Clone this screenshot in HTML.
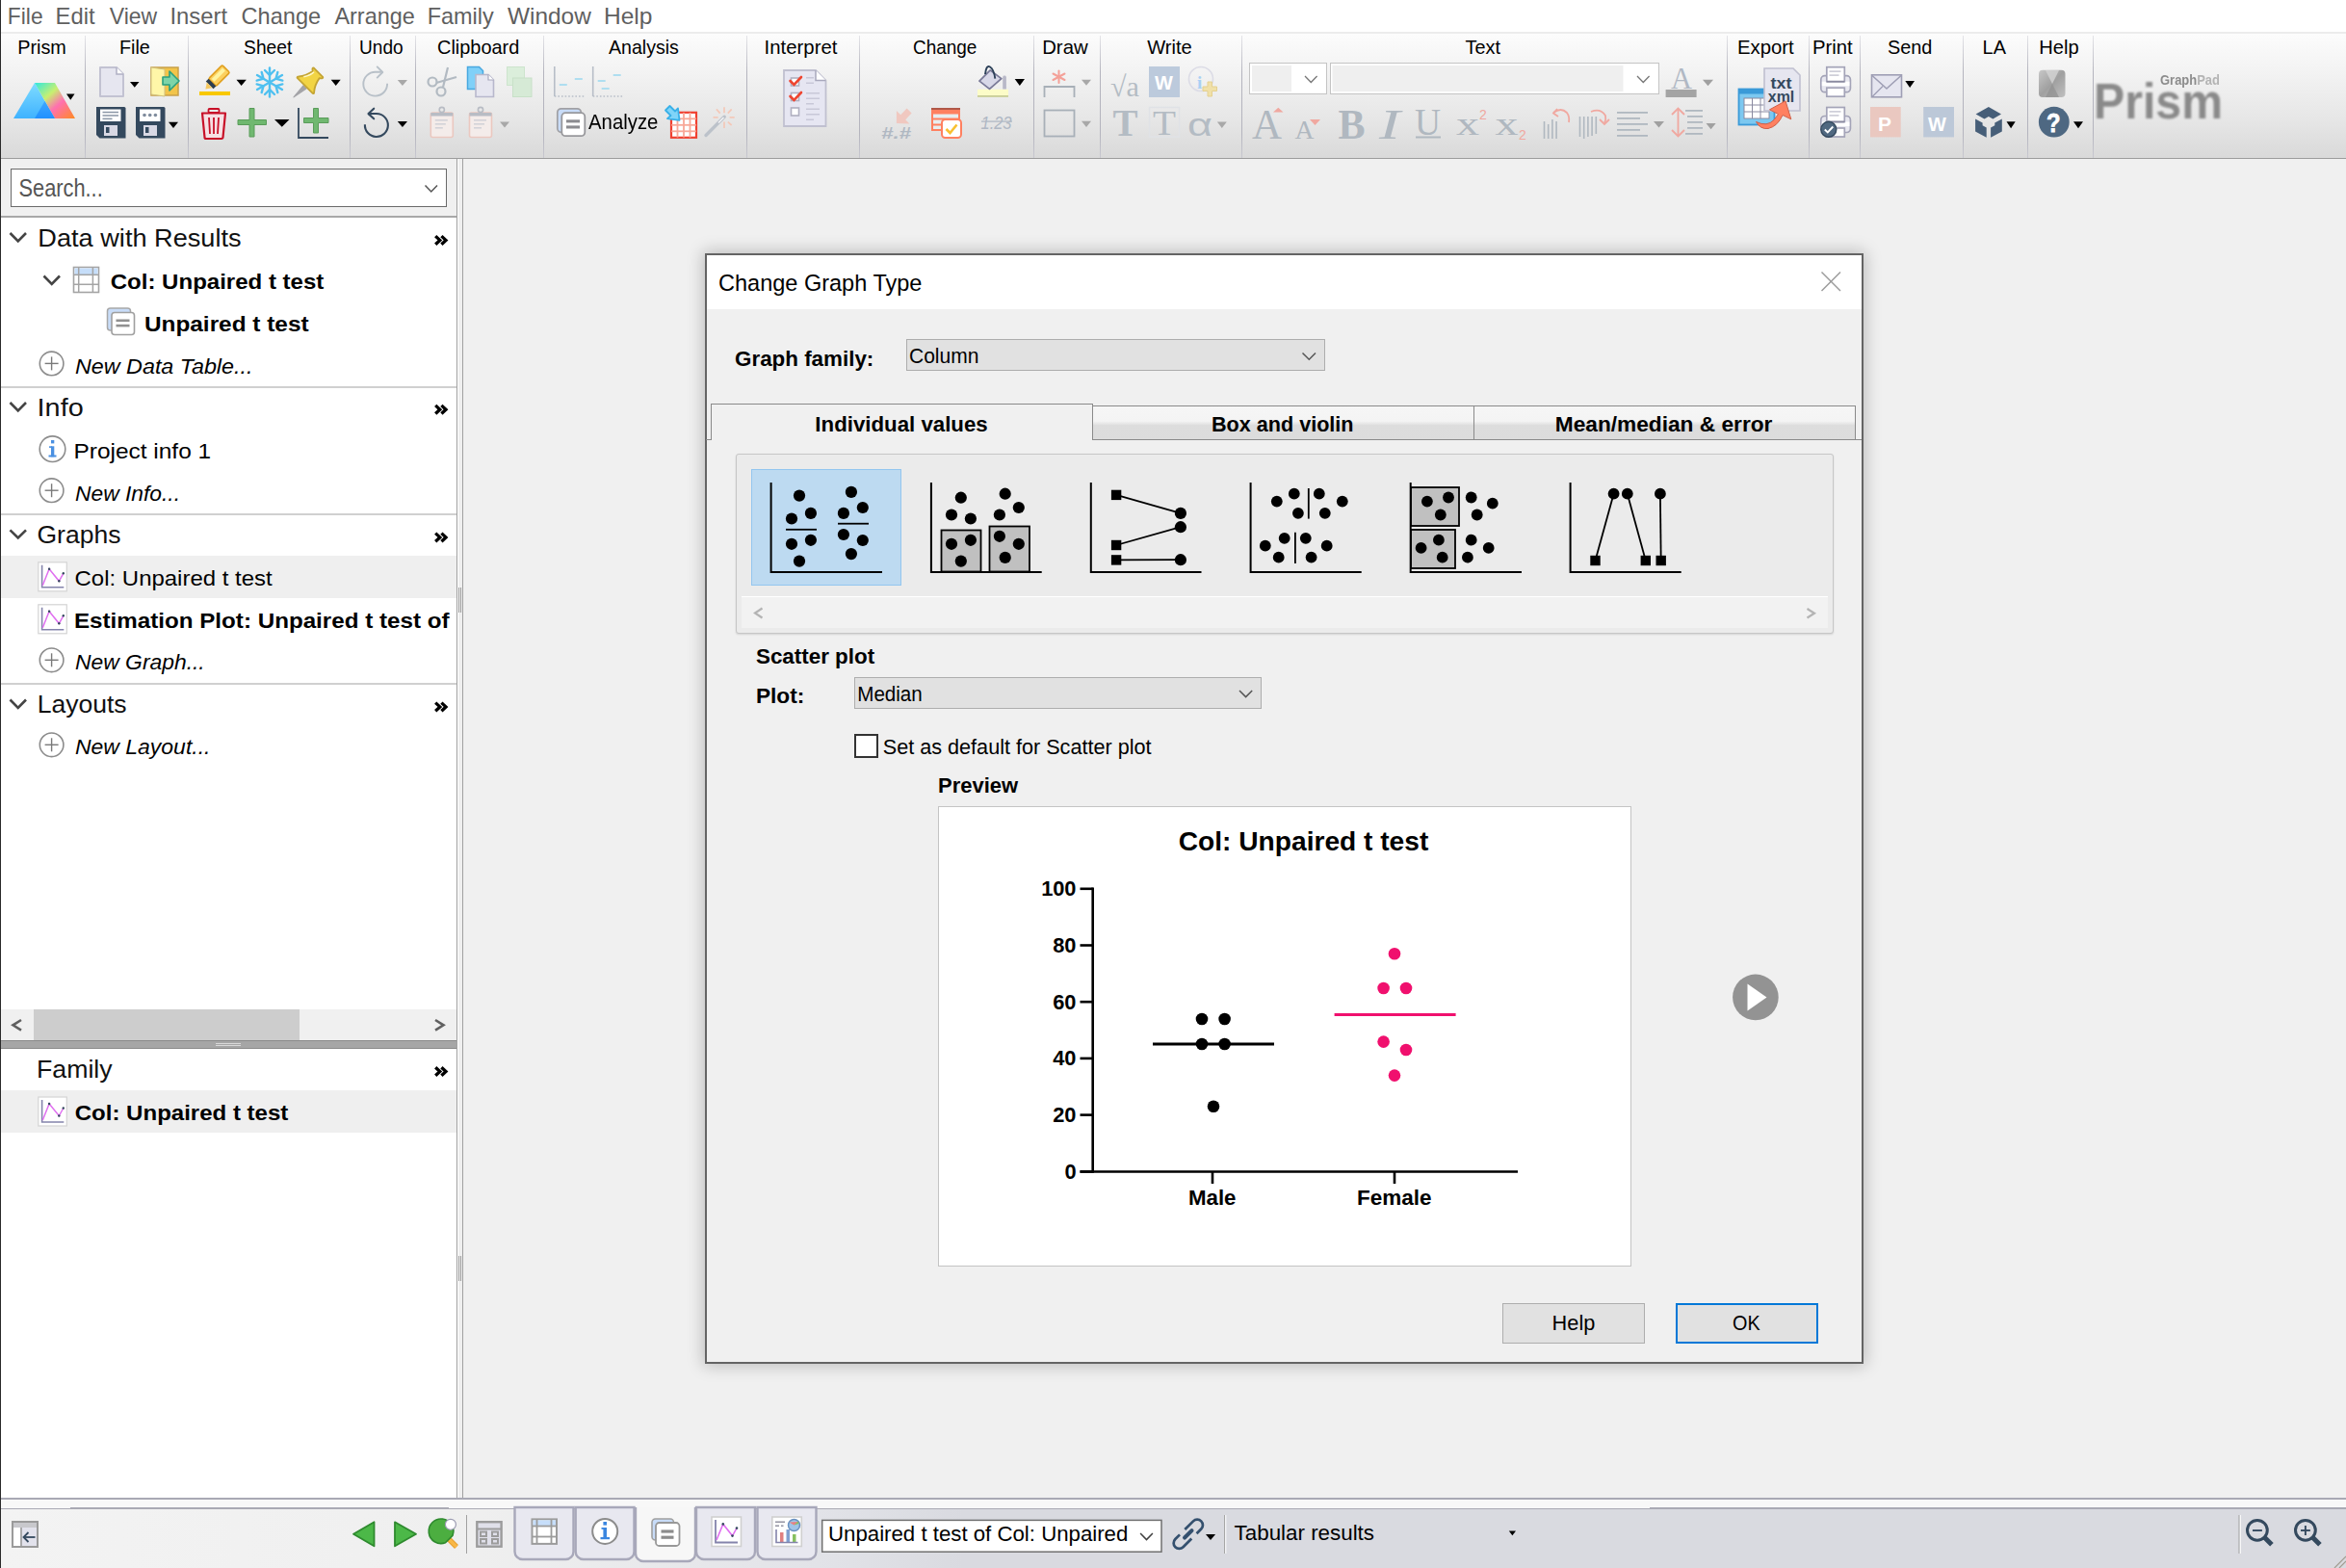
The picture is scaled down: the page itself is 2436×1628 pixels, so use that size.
<!DOCTYPE html><html><head><meta charset="utf-8"><style>
html,body{margin:0;padding:0;width:2436px;height:1628px;overflow:hidden;background:#f0f0f0;position:relative;font-family:"Liberation Sans",sans-serif}
.tx{position:absolute;white-space:nowrap}
svg{overflow:visible}
</style></head><body>
<div style="position:absolute;left:0px;top:0px;width:2436px;height:33px;background:#ffffff;"></div>
<div style="position:absolute;left:0px;top:33px;width:2436px;height:2px;background:#ececec;"></div>
<div style="position:absolute;left:0px;top:35px;width:2436px;height:129px;background:linear-gradient(#fcfcfc, #f3f3f3 30%, #e6e6e6 70%, #d9d9d9);"></div>
<div style="position:absolute;left:0px;top:164px;width:2436px;height:1px;background:#9c9c9c;"></div>
<div id="t_71c6356a2c" class="tx" style="left:9.6px;top:4.58px;font-size:24px;line-height:24px;font-weight:400;font-style:normal;color:#5f5f5f;font-family:'Liberation Sans',sans-serif;transform:translateX(-2.15px) scaleX(0.9506);transform-origin:0 0;">File</div>
<div id="t_c482373fa4" class="tx" style="left:59.7px;top:4.58px;font-size:24px;line-height:24px;font-weight:400;font-style:normal;color:#5f5f5f;font-family:'Liberation Sans',sans-serif;transform:translateX(-2.38px) scaleX(0.9904);transform-origin:0 0;">Edit</div>
<div id="t_5e11d77b09" class="tx" style="left:113.6px;top:4.58px;font-size:24px;line-height:24px;font-weight:400;font-style:normal;color:#5f5f5f;font-family:'Liberation Sans',sans-serif;transform:translateX(-0.20px) scaleX(0.9579);transform-origin:0 0;">View</div>
<div id="t_2e67d88531" class="tx" style="left:178.3px;top:4.58px;font-size:24px;line-height:24px;font-weight:400;font-style:normal;color:#5f5f5f;font-family:'Liberation Sans',sans-serif;transform:translateX(-1.60px) scaleX(0.9933);transform-origin:0 0;">Insert</div>
<div id="t_f1728f0a19" class="tx" style="left:251.7px;top:4.58px;font-size:24px;line-height:24px;font-weight:400;font-style:normal;color:#5f5f5f;font-family:'Liberation Sans',sans-serif;transform:translateX(-1.39px) scaleX(0.9809);transform-origin:0 0;">Change</div>
<div id="t_43a4b59b92" class="tx" style="left:347.8px;top:4.58px;font-size:24px;line-height:24px;font-weight:400;font-style:normal;color:#5f5f5f;font-family:'Liberation Sans',sans-serif;transform:translateX(-0.60px) scaleX(0.9764);transform-origin:0 0;">Arrange</div>
<div id="t_7ee1135975" class="tx" style="left:445.7px;top:4.58px;font-size:24px;line-height:24px;font-weight:400;font-style:normal;color:#5f5f5f;font-family:'Liberation Sans',sans-serif;transform:translateX(-2.35px) scaleX(0.9769);transform-origin:0 0;">Family</div>
<div id="t_ff34accd8c" class="tx" style="left:527.5px;top:4.58px;font-size:24px;line-height:24px;font-weight:400;font-style:normal;color:#5f5f5f;font-family:'Liberation Sans',sans-serif;transform:translateX(-1.01px) scaleX(1.0164);transform-origin:0 0;">Window</div>
<div id="t_89f8c1d0c2" class="tx" style="left:628.5px;top:4.58px;font-size:24px;line-height:24px;font-weight:400;font-style:normal;color:#5f5f5f;font-family:'Liberation Sans',sans-serif;transform:translateX(-2.02px) scaleX(1.0218);transform-origin:0 0;">Help</div>
<div style="position:absolute;left:88px;top:37px;width:1px;height:127px;background:linear-gradient(#e4e4e8, #b4b4be 30%, #b4b4be 80%, #c8c8d0);"></div>
<div style="position:absolute;left:195px;top:37px;width:1px;height:127px;background:linear-gradient(#e4e4e8, #b4b4be 30%, #b4b4be 80%, #c8c8d0);"></div>
<div style="position:absolute;left:363px;top:37px;width:1px;height:127px;background:linear-gradient(#e4e4e8, #b4b4be 30%, #b4b4be 80%, #c8c8d0);"></div>
<div style="position:absolute;left:431px;top:37px;width:1px;height:127px;background:linear-gradient(#e4e4e8, #b4b4be 30%, #b4b4be 80%, #c8c8d0);"></div>
<div style="position:absolute;left:564px;top:37px;width:1px;height:127px;background:linear-gradient(#e4e4e8, #b4b4be 30%, #b4b4be 80%, #c8c8d0);"></div>
<div style="position:absolute;left:775px;top:37px;width:1px;height:127px;background:linear-gradient(#e4e4e8, #b4b4be 30%, #b4b4be 80%, #c8c8d0);"></div>
<div style="position:absolute;left:892px;top:37px;width:1px;height:127px;background:linear-gradient(#e4e4e8, #b4b4be 30%, #b4b4be 80%, #c8c8d0);"></div>
<div style="position:absolute;left:1073px;top:37px;width:1px;height:127px;background:linear-gradient(#e4e4e8, #b4b4be 30%, #b4b4be 80%, #c8c8d0);"></div>
<div style="position:absolute;left:1142px;top:37px;width:1px;height:127px;background:linear-gradient(#e4e4e8, #b4b4be 30%, #b4b4be 80%, #c8c8d0);"></div>
<div style="position:absolute;left:1289px;top:37px;width:1px;height:127px;background:linear-gradient(#e4e4e8, #b4b4be 30%, #b4b4be 80%, #c8c8d0);"></div>
<div style="position:absolute;left:1793px;top:37px;width:1px;height:127px;background:linear-gradient(#e4e4e8, #b4b4be 30%, #b4b4be 80%, #c8c8d0);"></div>
<div style="position:absolute;left:1878px;top:37px;width:1px;height:127px;background:linear-gradient(#e4e4e8, #b4b4be 30%, #b4b4be 80%, #c8c8d0);"></div>
<div style="position:absolute;left:1931px;top:37px;width:1px;height:127px;background:linear-gradient(#e4e4e8, #b4b4be 30%, #b4b4be 80%, #c8c8d0);"></div>
<div style="position:absolute;left:2038px;top:37px;width:1px;height:127px;background:linear-gradient(#e4e4e8, #b4b4be 30%, #b4b4be 80%, #c8c8d0);"></div>
<div style="position:absolute;left:2105px;top:37px;width:1px;height:127px;background:linear-gradient(#e4e4e8, #b4b4be 30%, #b4b4be 80%, #c8c8d0);"></div>
<div style="position:absolute;left:2173px;top:37px;width:1px;height:127px;background:linear-gradient(#e4e4e8, #b4b4be 30%, #b4b4be 80%, #c8c8d0);"></div>
<div id="t_4e412e6ac3" class="tx" style="left:19.9px;top:38.73px;font-size:20.4px;line-height:20.4px;font-weight:400;font-style:normal;color:#000;font-family:'Liberation Sans',sans-serif;transform:translateX(-1.77px) scaleX(0.9718);transform-origin:0 0;">Prism</div>
<div id="t_3ec2d68212" class="tx" style="left:125.5px;top:38.73px;font-size:20.4px;line-height:20.4px;font-weight:400;font-style:normal;color:#000;font-family:'Liberation Sans',sans-serif;transform:translateX(-1.99px) scaleX(0.9689);transform-origin:0 0;">File</div>
<div id="t_ed9601ad73" class="tx" style="left:254px;top:38.73px;font-size:20.4px;line-height:20.4px;font-weight:400;font-style:normal;color:#000;font-family:'Liberation Sans',sans-serif;transform:translateX(-0.94px) scaleX(0.9427);transform-origin:0 0;">Sheet</div>
<div id="t_789032d242" class="tx" style="left:374px;top:38.73px;font-size:20.4px;line-height:20.4px;font-weight:400;font-style:normal;color:#000;font-family:'Liberation Sans',sans-serif;transform:translateX(-0.94px) scaleX(0.9362);transform-origin:0 0;">Undo</div>
<div id="t_c60f0eda41" class="tx" style="left:455px;top:38.73px;font-size:20.4px;line-height:20.4px;font-weight:400;font-style:normal;color:#000;font-family:'Liberation Sans',sans-serif;transform:translateX(-0.98px) scaleX(0.9765);transform-origin:0 0;">Clipboard</div>
<div id="t_12b302b7a3" class="tx" style="left:632.5px;top:38.73px;font-size:20.4px;line-height:20.4px;font-weight:400;font-style:normal;color:#000;font-family:'Liberation Sans',sans-serif;transform:translateX(-1.02px) scaleX(0.9600);transform-origin:0 0;">Analysis</div>
<div id="t_63e9136e1a" class="tx" style="left:795.7px;top:38.73px;font-size:20.4px;line-height:20.4px;font-weight:400;font-style:normal;color:#000;font-family:'Liberation Sans',sans-serif;transform:translateX(-2.38px) scaleX(0.9975);transform-origin:0 0;">Interpret</div>
<div id="t_b00e8f179c" class="tx" style="left:948.5px;top:38.73px;font-size:20.4px;line-height:20.4px;font-weight:400;font-style:normal;color:#000;font-family:'Liberation Sans',sans-serif;transform:translateX(-0.96px) scaleX(0.9286);transform-origin:0 0;">Change</div>
<div id="t_90dcf28672" class="tx" style="left:1083.4px;top:38.73px;font-size:20.4px;line-height:20.4px;font-weight:400;font-style:normal;color:#000;font-family:'Liberation Sans',sans-serif;transform:translateX(-0.81px) scaleX(0.9970);transform-origin:0 0;">Draw</div>
<div id="t_9900720f19" class="tx" style="left:1191.4px;top:38.73px;font-size:20.4px;line-height:20.4px;font-weight:400;font-style:normal;color:#000;font-family:'Liberation Sans',sans-serif;transform:translateX(0.20px) scaleX(0.9874);transform-origin:0 0;">Write</div>
<div id="t_c89a2ac3e7" class="tx" style="left:1521.7px;top:38.73px;font-size:20.4px;line-height:20.4px;font-weight:400;font-style:normal;color:#000;font-family:'Liberation Sans',sans-serif;transform:translateX(-0.39px) scaleX(0.9737);transform-origin:0 0;">Text</div>
<div id="t_b28e720482" class="tx" style="left:1806px;top:38.73px;font-size:20.4px;line-height:20.4px;font-weight:400;font-style:normal;color:#000;font-family:'Liberation Sans',sans-serif;transform:translateX(-2.01px) scaleX(0.9968);transform-origin:0 0;">Export</div>
<div id="t_bbdc3bfa97" class="tx" style="left:1884px;top:38.73px;font-size:20.4px;line-height:20.4px;font-weight:400;font-style:normal;color:#000;font-family:'Liberation Sans',sans-serif;transform:translateX(-1.99px) scaleX(0.9956);transform-origin:0 0;">Print</div>
<div id="t_a9b1d18a54" class="tx" style="left:1961px;top:38.73px;font-size:20.4px;line-height:20.4px;font-weight:400;font-style:normal;color:#000;font-family:'Liberation Sans',sans-serif;transform:translateX(-0.96px) scaleX(0.9739);transform-origin:0 0;">Send</div>
<div id="t_51d7edf9fc" class="tx" style="left:2059.7px;top:38.73px;font-size:20.4px;line-height:20.4px;font-weight:400;font-style:normal;color:#000;font-family:'Liberation Sans',sans-serif;transform:translateX(-1.40px) scaleX(0.9763);transform-origin:0 0;">LA</div>
<div id="t_e65a24fe2b" class="tx" style="left:2118.9px;top:38.73px;font-size:20.4px;line-height:20.4px;font-weight:400;font-style:normal;color:#000;font-family:'Liberation Sans',sans-serif;transform:translateX(-1.78px) scaleX(0.9856);transform-origin:0 0;">Help</div>
<div style="position:absolute;left:0px;top:0px;width:1px;height:1628px;background:#2a2a2a;"></div>
<div style="position:absolute;left:1px;top:165px;width:473px;height:1390px;background:#ffffff;"></div>
<div style="position:absolute;left:1px;top:165px;width:473px;height:59px;background:#f0f0f0;"></div>
<div style="position:absolute;left:1px;top:224px;width:473px;height:2px;background:#a8a8a8;"></div>
<div style="position:absolute;left:474px;top:165px;width:1px;height:1390px;background:#a0a0a0;"></div>
<div style="position:absolute;left:475px;top:165px;width:1px;height:1390px;background:#ffffff;"></div>
<div style="position:absolute;left:476px;top:165px;width:4px;height:1390px;background:#efefef;"></div>
<div style="position:absolute;left:480px;top:165px;width:1px;height:1390px;background:#a0a0a0;"></div>
<div style="position:absolute;left:0px;top:1555px;width:2436px;height:2px;background:#a9a9b4;"></div>
<div style="position:absolute;left:0px;top:1557px;width:2436px;height:9px;background:#f8f8f8;"></div>
<div style="position:absolute;left:0px;top:1566px;width:2436px;height:1px;background:#aaaab4;"></div>
<div style="position:absolute;left:73px;top:1565px;width:393px;height:2px;background:#aaaab4;"></div>
<div style="position:absolute;left:1713px;top:1565px;width:723px;height:2px;background:#aaaab4;"></div>
<div style="position:absolute;left:0px;top:1567px;width:2436px;height:61px;background:linear-gradient(90deg, #f3f3f3 0px, #efefef 500px, #e2e3e8 850px, #d9dae0 1000px, #d9dae0 2436px);"></div>
<div id="t_c232c51d29" class="tx" style="left:611px;top:116.35px;font-size:21.2px;line-height:21.2px;font-weight:400;font-style:normal;color:#000;font-family:'Liberation Sans',sans-serif;transform:translateX(0.00px) scaleX(0.9600);transform-origin:0 0;">Analyze</div>
<svg style="position:absolute;left:0px;top:0px;" width="2436" height="165" viewBox="0 0 2436 165"><defs>
<linearGradient id="pL" x1="0" y1="0" x2="0" y2="1"><stop offset="0" stop-color="#7fdcff"/><stop offset="1" stop-color="#3fb2ff"/></linearGradient>
<linearGradient id="pR" x1="0" y1="0" x2="1" y2="1"><stop offset="0" stop-color="#30e8e0"/><stop offset="0.35" stop-color="#c8f070"/><stop offset="0.6" stop-color="#ff70b0"/><stop offset="1" stop-color="#ff8a20"/></linearGradient>
<linearGradient id="pM" x1="0" y1="0" x2="0" y2="1"><stop offset="0" stop-color="#40a8ff"/><stop offset="1" stop-color="#2090ff"/></linearGradient>
</defs><polygon points="14,123 36,86 57,123" fill="url(#pL)"/><polygon points="36,86 57,86 78,123 57,123" fill="url(#pR)"/><polygon points="36,123 46.5,105 57,123" fill="url(#pM)"/><polygon points="69,97.6 77.5,97.6 73.25,103.7" fill="#000"/><path d="M104,70 h17 l7,7 v23 h-24 z" fill="#e6e6f0" stroke="#c2c2d2" stroke-width="2" stroke-linejoin="round"/><path d="M121,70 v7 h7" fill="#fff" stroke="#b0b0c4" stroke-width="1.5"/><polygon points="135,84.9 144.5,84.9 139.75,90.7" fill="#000"/><rect x="157" y="70" width="28" height="29" fill="#f2c44a" stroke="#c8a048" stroke-width="1.5"/><path d="M157,70 l14,2 v28 l-14,-2 z" fill="#fff6a8" stroke="#d0c080" stroke-width="1"/><path d="M169,80 h7 v-6 l10,10 l-10,10 v-6 h-7 z" fill="#7ed4a8" stroke="#2aa080" stroke-width="1.6" stroke-linejoin="round"/><path d="M100,111 h29 a1.5,1.5 0 0 1 1.5,1.5 v31 h-27 l-3.5,-3.5 z" fill="#34495e"/><rect x="104" y="113.5" width="21.5" height="12.5" fill="#ffffff"/><rect x="108" y="130" width="14" height="11" fill="#d8d8e4"/><rect x="110" y="132" width="3.5" height="6" fill="#34495e"/><rect x="106.5" y="115.8" width="16.5" height="1.5" fill="#8a96a6"/><rect x="106.5" y="119.2" width="16.5" height="1.5" fill="#8a96a6"/><rect x="106.5" y="122.6" width="10" height="1.5" fill="#8a96a6"/><path d="M141,111 h29 a1.5,1.5 0 0 1 1.5,1.5 v31 h-27 l-3.5,-3.5 z" fill="#34495e"/><rect x="145" y="113.5" width="21.5" height="12.5" fill="#ffffff"/><rect x="149" y="130" width="14" height="11" fill="#d8d8e4"/><rect x="151" y="132" width="3.5" height="6" fill="#34495e"/><circle cx="150" cy="119.5" r="1.8" fill="#7f8c9d"/><circle cx="155.7" cy="119.5" r="1.8" fill="#7f8c9d"/><circle cx="161.4" cy="119.5" r="1.8" fill="#7f8c9d"/><polygon points="175,126.8 185,126.8 180.0,133" fill="#000"/><g transform="translate(224,82) rotate(45)"><rect x="-5.5" y="-15" width="11" height="20" rx="1.5" fill="#fcd060" stroke="#e0a020" stroke-width="1.6"/><rect x="-3" y="-13" width="4" height="16" fill="#fff4a0"/><rect x="-5.5" y="5" width="11" height="4" fill="#2c3e50"/><polygon points="-4,9 4,9 0,15" fill="#f5c860"/></g><rect x="207" y="95" width="32" height="4" fill="#f8c800"/><polygon points="245.5,82.7 255.8,82.7 250.65,89" fill="#000"/><g stroke="#4fc0f0" stroke-width="2.4" stroke-linecap="round"><g transform="rotate(0 280 85.5)"><line x1="280" y1="70.5" x2="280" y2="100.5"/><polyline points="275,73 280,78 285,73" fill="none"/><polyline points="275,98 280,93 285,98" fill="none"/></g><g transform="rotate(60 280 85.5)"><line x1="280" y1="70.5" x2="280" y2="100.5"/><polyline points="275,73 280,78 285,73" fill="none"/><polyline points="275,98 280,93 285,98" fill="none"/></g><g transform="rotate(120 280 85.5)"><line x1="280" y1="70.5" x2="280" y2="100.5"/><polyline points="275,73 280,78 285,73" fill="none"/><polyline points="275,98 280,93 285,98" fill="none"/></g></g><path d="M305,100.8 L315,89 L318,92 Z" fill="#a4a4a8" stroke="#a4a4a8" stroke-width="1.2" stroke-linejoin="round"/><g transform="translate(323.5,82.2) rotate(-45)"><path d="M-9.5,-11.5 Q-9,-12.8 -7.5,-11.3 Q-2,-6.5 6.5,-5 L8.3,-7 Q9.6,-7.8 9.9,-6.5 L9.9,6.5 Q9.6,7.8 8.3,7 L6.5,5 Q-2,6.5 -7.5,11.3 Q-9,12.8 -9.5,11.5 Z" fill="#f2d444" stroke="#c4a434" stroke-width="1.8" stroke-linejoin="round"/><path d="M-4,-7.5 Q2,-3.5 7,-3.5" fill="none" stroke="#fff8c8" stroke-width="1.6"/></g><polygon points="343.7,82.7 353.7,82.7 348.7,89" fill="#000"/><rect x="216.5" y="113" width="11" height="4" rx="1" fill="none" stroke="#c81028" stroke-width="1.8"/><path d="M210,117.5 h24 l-2.5,25 a1.5,1.5 0 0 1 -1.5,1.5 h-16 a1.5,1.5 0 0 1 -1.5,-1.5 z" fill="#f6e0e4" stroke="#c81028" stroke-width="2.2" stroke-linejoin="round"/><g stroke="#c81028" stroke-width="1.8"><line x1="217" y1="122" x2="218" y2="139"/><line x1="222" y1="122" x2="222" y2="139"/><line x1="227" y1="122" x2="226" y2="139"/></g><path d="M259,112.5 h5 v12 h12.5 v5 h-12.5 v12.5 h-5 v-12.5 h-12 v-5 h12 z" fill="#70b870" stroke="#5a9c5a" stroke-width="1"/><polygon points="285,124 300.5,124 292.75,131.8" fill="#000"/><path d="M310,112 v31 h31" fill="none" stroke="#34495e" stroke-width="1.8"/><path d="M325.5,112.5 h5 v10 h10.5 v5 h-10.5 v10.5 h-5 v-10.5 h-10 v-5 h10 z" fill="#70b870" stroke="#5a9c5a" stroke-width="1"/><path d="M402.1,86.8 A12.4,12.4 0 1 1 389.8,74.8 H397" fill="none" stroke="#b8c0c8" stroke-width="1.9"/><polyline points="391.7,69.4 397.3,75 391.7,80.6" fill="none" stroke="#b8c0c8" stroke-width="1.9" stroke-linecap="round" stroke-linejoin="round"/><polygon points="412.8,83 423,83 417.9,89" fill="#a8a8a8"/><path d="M378.9,129.3 A12,12 0 1 0 390.9,118 H383" fill="none" stroke="#34495e" stroke-width="2.1"/><polyline points="388.2,112.7 382.5,118.1 388.2,123.3" fill="none" stroke="#34495e" stroke-width="2.1" stroke-linecap="round" stroke-linejoin="round"/><polygon points="412.8,126.1 423,126.1 417.9,132" fill="#000"/><g stroke="#b2bac2" stroke-width="2.2" fill="none"><circle cx="449" cy="85" r="4.5"/><circle cx="458" cy="95" r="4.5"/><line x1="453" y1="86" x2="474" y2="80"/><line x1="460" y1="90.5" x2="465" y2="70"/></g><path d="M485.5,69.5 h12 l4,4 v19 h-16 z" fill="#80d0f8" stroke="#48a8e0" stroke-width="1.5"/><path d="M494,77.5 h13 l5.5,5.5 v17.5 h-18.5 z" fill="#e6e6f0" stroke="#b8b8cc" stroke-width="1.6"/><path d="M507,77.5 v5.5 h5.5" fill="#fff" stroke="#a8a8bc" stroke-width="1.2"/><rect x="526.5" y="69.5" width="18" height="19" fill="#dbeedb" stroke="#cde4cd" stroke-width="1"/><rect x="532.5" y="81" width="19.5" height="19.5" fill="#d6ead6" stroke="#c8e0c8" stroke-width="1"/><rect x="447.3" y="117" width="23" height="25.5" rx="2" fill="#f4ecea" stroke="#ebc8c0" stroke-width="1.6"/><rect x="447.3" y="117" width="23" height="3.5" fill="#b8bcc4"/><circle cx="458.8" cy="114" r="2.6" fill="none" stroke="#b8bcc4" stroke-width="1.6"/><g fill="#d2d2d8"><rect x="451.8" y="124" width="13" height="1.6"/><rect x="451.8" y="128" width="11" height="1.6"/><rect x="451.8" y="132" width="8" height="1.6"/></g><rect x="487.5" y="117" width="23" height="25.5" rx="2" fill="#f4ecea" stroke="#ebc8c0" stroke-width="1.6"/><rect x="487.5" y="117" width="23" height="3.5" fill="#b8bcc4"/><circle cx="499" cy="114" r="2.6" fill="none" stroke="#b8bcc4" stroke-width="1.6"/><g fill="#d2d2d8"><rect x="492" y="124" width="13" height="1.6"/><rect x="492" y="128" width="11" height="1.6"/><rect x="492" y="132" width="8" height="1.6"/></g><polygon points="519,126.6 529,126.6 524.0,132.5" fill="#a8a8a8"/><line x1="575.8" y1="69" x2="575.8" y2="100" stroke="#b8bec8" stroke-width="1.6"/><line x1="575.8" y1="100" x2="606.8" y2="100" stroke="#b8bec8" stroke-width="1.6" stroke-dasharray="1.6,2"/><line x1="580.8" y1="88" x2="588.8" y2="88" stroke="#a8dcf0" stroke-width="1.8"/><line x1="596.8" y1="82" x2="604.8" y2="82" stroke="#a8dcf0" stroke-width="1.8"/><line x1="615.7" y1="69" x2="615.7" y2="100" stroke="#b8bec8" stroke-width="1.6"/><line x1="615.7" y1="100" x2="646.7" y2="100" stroke="#b8bec8" stroke-width="1.6" stroke-dasharray="1.6,2"/><line x1="620.7" y1="84" x2="628.7" y2="84" stroke="#a8dcf0" stroke-width="1.8"/><line x1="624.7" y1="92" x2="632.7" y2="92" stroke="#a8dcf0" stroke-width="1.8"/><line x1="636.7" y1="78" x2="644.7" y2="78" stroke="#a8dcf0" stroke-width="1.8"/><rect x="578.8" y="112.8" width="24.5" height="24.5" rx="4" fill="#c8dcf8" stroke="#a0a0a4" stroke-width="1.7"/><rect x="583.3" y="117.2" width="24" height="24" rx="4" fill="#ffffff" stroke="#98989c" stroke-width="1.8"/><rect x="588" y="124.3" width="14" height="3.1" fill="#8c8c90"/><rect x="588" y="130.4" width="14" height="3.1" fill="#8c8c90"/><rect x="697" y="116.8" width="26" height="26" fill="#fff" stroke="#f04030" stroke-width="2.2"/><g stroke="#f8a898" stroke-width="1.8"><line x1="703.5" y1="117" x2="703.5" y2="142.6"/><line x1="710" y1="117" x2="710" y2="142.6"/><line x1="716.5" y1="117" x2="716.5" y2="142.6"/><line x1="697.2" y1="123.3" x2="722.8" y2="123.3"/><line x1="697.2" y1="129.8" x2="722.8" y2="129.8"/><line x1="697.2" y1="136.3" x2="722.8" y2="136.3"/></g><path d="M705.5,124.9 L704,112.5 L701,115.5 L695.5,110 L691,114.5 L696.5,120 L693,123.2 Z" fill="#80d4f8" stroke="#38b0e8" stroke-width="1.8" stroke-linejoin="round"/><line x1="733" y1="140.5" x2="752.2" y2="121.2" stroke="#bcc2ca" stroke-width="3.4" stroke-linecap="round"/><line x1="746" y1="127.5" x2="751.5" y2="122" stroke="#f4f4f6" stroke-width="1.4"/><g stroke="#f4c8b8" stroke-width="1.7"><line x1="752" y1="111.2" x2="752" y2="117.2"/><line x1="757.6" y1="121.9" x2="762.7" y2="121.9"/><line x1="740.5" y1="121.9" x2="745.6" y2="121.9"/><line x1="743.9" y1="113.4" x2="747.7" y2="117.6"/><line x1="759.7" y1="113.4" x2="755.8" y2="117.6"/><line x1="755.8" y1="126.6" x2="759.7" y2="130"/><line x1="752" y1="126.6" x2="752" y2="133"/></g><path d="M814,73 h33 l10.5,10.5 v47.5 h-43.5 z" fill="#e6e6f2" stroke="#c0c0d0" stroke-width="1.8"/><path d="M847,73 v10.5 h10.5" fill="#fff" stroke="#a8a8bc" stroke-width="1.5"/><g fill="#fff" stroke="#b0b0c0" stroke-width="1.6"><rect x="821.5" y="81" width="8" height="8"/><rect x="821.5" y="96.5" width="8" height="8"/><rect x="821.5" y="112" width="8" height="8"/></g><g fill="none" stroke="#ee4530" stroke-width="2.6" stroke-linecap="round"><polyline points="820.5,84 824.5,88 832,80"/><polyline points="820.5,100 824.5,104 832,96"/></g><g fill="#c8c8d8"><rect x="837" y="80" width="8" height="1.5"/><rect x="837" y="85.5" width="8" height="1.5"/><rect x="837" y="96" width="14" height="1.5"/><rect x="837" y="101.5" width="14" height="1.5"/><rect x="837" y="107" width="8" height="1.5"/><rect x="837" y="112.5" width="14" height="1.5"/><rect x="837" y="118" width="14" height="1.5"/><rect x="837" y="123.5" width="8" height="1.5"/></g><text x="915" y="143.9" font-family="Liberation Sans" font-weight="700" font-style="italic" font-size="16.5" fill="#b0b8c2" textLength="31" lengthAdjust="spacingAndGlyphs">#.#</text><path d="M930.9,128 V114.9 l4.3,4.3 l6.4,-6.6 l5,5 l-6.4,6.6 l4.3,4.3 z" fill="#f0c8c0"/><rect x="967" y="112" width="30" height="24" fill="#ff8060"/><rect x="967" y="112" width="30" height="2" fill="#b05848"/><g fill="#e8eef0"><rect x="969" y="118.5" width="26" height="4"/><rect x="969" y="124.5" width="26" height="4"/><rect x="969" y="130.5" width="26" height="3.5"/></g><rect x="978" y="124" width="20" height="19" rx="3.5" fill="#fff" stroke="#ff8060" stroke-width="2"/><polyline points="982.5,134 986.5,138 993.5,129.5" fill="none" stroke="#f8c030" stroke-width="2.6"/><text x="1018.5" y="133.7" font-family="Liberation Sans" font-style="italic" font-size="19" fill="#b0b8c4" textLength="32" lengthAdjust="spacingAndGlyphs">1.23</text><line x1="1019" y1="126.1" x2="1051" y2="126.1" stroke="#b0b8c4" stroke-width="1.3"/><rect x="1015" y="92.8" width="32" height="8" fill="#fcfcc8"/><rect x="1015" y="99" width="32" height="1.8" fill="#c8cc98"/><path d="M1041.2,92.4 V80 a1.9,1.9 0 0 1 3.7,0 V92.4 z" fill="#b8b8c8"/><polygon points="1017,84.1 1028.2,72.9 1039.8,81.6 1027.5,92.4" fill="#d8d8e8" stroke="#7a7a98" stroke-width="1.8" stroke-linejoin="round"/><path d="M1023,77 Q1024,67 1028,69.5 Q1032,72 1033.3,81.6" fill="none" stroke="#2c4058" stroke-width="1.9"/><polygon points="1053.7,82 1064,82 1058.85,89" fill="#000"/><g stroke="#f4a098" stroke-width="2" stroke-linecap="round"><line x1="1099.5" y1="73.5" x2="1099.5" y2="86"/><line x1="1093.5" y1="76.5" x2="1105.5" y2="83"/><line x1="1105.5" y1="76.5" x2="1093.5" y2="83"/></g><path d="M1084.5,101 v-11 h31 v11" fill="none" stroke="#a8b0b8" stroke-width="1.8"/><polygon points="1123,82.8 1133,82.8 1128.0,88.8" fill="#a8a8a8"/><rect x="1084.5" y="114.5" width="31" height="27" fill="none" stroke="#a8b0b8" stroke-width="1.8"/><polygon points="1123,125.8 1133,125.8 1128.0,132" fill="#a8a8a8"/><text x="1153" y="100" font-family="Liberation Serif" font-size="30" fill="#b4bcc4" textLength="30" lengthAdjust="spacingAndGlyphs">√a</text><rect x="1193" y="69" width="32" height="32" fill="#bccadc"/><text x="1199" y="93" font-family="Liberation Sans" font-weight="700" font-size="20" fill="#ffffff">W</text><circle cx="1247" cy="82" r="12.5" fill="none" stroke="#dcdce6" stroke-width="1.6"/><text x="1243" y="92" font-family="Liberation Serif" font-weight="700" font-size="19" fill="#a8d0f4">i</text><path d="M1254,85 h4.5 v5 h5 v4.5 h-5 v5.5 h-4.5 v-5.5 h-5 v-4.5 h5 z" fill="#f0e0a8" stroke="#e4d090" stroke-width="1"/><text x="1155.5" y="141" font-family="Liberation Serif" font-weight="700" font-size="40" fill="#b4bcc4" textLength="26" lengthAdjust="spacingAndGlyphs">T</text><rect x="1193.5" y="111.5" width="31" height="30.5" fill="none" stroke="#e0e2e6" stroke-width="1.5"/><text x="1197" y="139.5" font-family="Liberation Serif" font-size="36" fill="#b4bcc4" textLength="24" lengthAdjust="spacingAndGlyphs">T</text><text x="1233" y="141" font-family="Liberation Sans" font-size="34" fill="#b4bcc4" textLength="26" lengthAdjust="spacingAndGlyphs">α</text><polygon points="1263.9,126.5 1273.8,126.5 1268.85,133" fill="#a8a8a8"/><rect x="1297.5" y="65.5" width="80" height="32" fill="#ffffff" stroke="#c4c4c4" stroke-width="1"/><rect x="1300" y="68" width="41" height="27" fill="#efefef"/><polyline points="1355,79 1361.3,85.5 1367.6,79" fill="none" stroke="#777" stroke-width="1.3"/><rect x="1381.5" y="65.5" width="341" height="32" fill="#ffffff" stroke="#c4c4c4" stroke-width="1"/><rect x="1383.5" y="68" width="302" height="27" fill="#efefef"/><polyline points="1700,79 1706.3,85.5 1712.6,79" fill="none" stroke="#777" stroke-width="1.3"/><text x="1735" y="91.5" font-family="Liberation Serif" font-size="31" fill="#b0b8c4" textLength="22" lengthAdjust="spacingAndGlyphs">A</text><rect x="1729.6" y="93" width="32" height="8" fill="#a4a4a4"/><polygon points="1768,82.8 1779,82.8 1773.5,89.3" fill="#a0a0a0"/><text x="1300" y="144" font-family="Liberation Serif" font-size="44" fill="#b0b8c0" textLength="31" lengthAdjust="spacingAndGlyphs">A</text><polygon points="1322,116.5 1332.5,116.5 1327.3,111.7" fill="#f0a8a0"/><text x="1344.5" y="144" font-family="Liberation Serif" font-size="28" fill="#b0b8c0" textLength="20" lengthAdjust="spacingAndGlyphs">A</text><polygon points="1360,124 1371,124 1365.5,130" fill="#f0a8a0"/><text x="1389.5" y="144.3" font-family="Liberation Serif" font-weight="700" font-size="44" fill="#b0b8c0" textLength="28" lengthAdjust="spacingAndGlyphs">B</text><text x="1432" y="144.3" font-family="Liberation Serif" font-style="italic" font-size="44" fill="#b0b8c0" textLength="22" lengthAdjust="spacingAndGlyphs">I</text><text x="1469" y="140" font-family="Liberation Serif" font-size="40" fill="#b0b8c0" textLength="27" lengthAdjust="spacingAndGlyphs">U</text><rect x="1470" y="141.5" width="26" height="2" fill="#b0b8c0"/><text x="1512" y="140" font-family="Liberation Serif" font-size="34" fill="#b0b8c0" textLength="24" lengthAdjust="spacingAndGlyphs">x</text><text x="1536" y="124" font-family="Liberation Sans" font-size="14" fill="#f0a8a0">2</text><text x="1552.5" y="140" font-family="Liberation Serif" font-size="34" fill="#b0b8c0" textLength="24" lengthAdjust="spacingAndGlyphs">x</text><text x="1577" y="144.5" font-family="Liberation Sans" font-size="14" fill="#f0a8a0">2</text><line x1="1603.5" y1="126" x2="1603.5" y2="144" stroke="#b0b8c0" stroke-width="1.6"/><line x1="1607.7" y1="129" x2="1607.7" y2="144" stroke="#b0b8c0" stroke-width="1.6"/><line x1="1611.9" y1="124" x2="1611.9" y2="144" stroke="#b0b8c0" stroke-width="1.6"/><line x1="1616.1" y1="126" x2="1616.1" y2="144" stroke="#b0b8c0" stroke-width="1.6"/><path d="M1613,117 q8,-6 14,0 q3,4 2,10" fill="none" stroke="#f0a8a0" stroke-width="1.8"/><polyline points="1617,113 1613,117.5 1618,121" fill="none" stroke="#f0a8a0" stroke-width="1.8"/><line x1="1640.5" y1="121" x2="1640.5" y2="142" stroke="#b0b8c0" stroke-width="1.6"/><line x1="1644.7" y1="121" x2="1644.7" y2="144" stroke="#b0b8c0" stroke-width="1.6"/><line x1="1648.9" y1="121" x2="1648.9" y2="142" stroke="#b0b8c0" stroke-width="1.6"/><line x1="1653.1" y1="121" x2="1653.1" y2="141" stroke="#b0b8c0" stroke-width="1.6"/><line x1="1657.3" y1="121" x2="1657.3" y2="139" stroke="#b0b8c0" stroke-width="1.6"/><path d="M1652,116 q10,-4 15,4 q1,4 -1,8" fill="none" stroke="#f0a8a0" stroke-width="1.8"/><polyline points="1661,124 1666,129 1671,124" fill="none" stroke="#f0a8a0" stroke-width="1.8"/><g fill="#b0b8c0"><rect x="1679" y="116" width="32" height="1.8"/><rect x="1679" y="122" width="24" height="1.8"/><rect x="1679" y="128" width="32" height="1.8"/><rect x="1679" y="134" width="24" height="1.8"/><rect x="1679" y="140" width="32" height="1.8"/></g><polygon points="1717,126 1728,126 1722.5,132.4" fill="#a0a0a0"/><g fill="none" stroke="#f0a8a0" stroke-width="1.8"><line x1="1742.5" y1="113" x2="1742.5" y2="141"/><polyline points="1736,119 1742.5,112.5 1749,119"/><polyline points="1736,135 1742.5,141.5 1749,135"/></g><g fill="#b0b8c0"><rect x="1750" y="114" width="18" height="1.8"/><rect x="1752" y="120" width="16" height="1.8"/><rect x="1752" y="126" width="16" height="1.8"/><rect x="1752" y="132" width="16" height="1.8"/><rect x="1750" y="138" width="18" height="1.8"/></g><polygon points="1771.5,128 1781.7,128 1776.6,134.3" fill="#a0a0a0"/><rect x="1805.5" y="92.5" width="37" height="37" fill="#7cc8f0" stroke="#3a9ad8" stroke-width="1.8"/><rect x="1805.5" y="92.5" width="37" height="5" fill="#3a9ad8"/><rect x="1811" y="102" width="26" height="21" fill="#fff" stroke="#8a8aa0" stroke-width="1"/><g stroke="#8a8aa0" stroke-width="1"><line x1="1811" y1="109" x2="1837" y2="109"/><line x1="1811" y1="116" x2="1837" y2="116"/><line x1="1819.5" y1="102" x2="1819.5" y2="123"/><line x1="1828" y1="102" x2="1828" y2="123"/></g><path d="M1832,71 h30 l7,7 v37 h-37 z" fill="#e6e6f0" stroke="#c0c0d0" stroke-width="1.6"/><text x="1838.6" y="91.7" font-family="Liberation Sans" font-weight="700" font-size="16" fill="#34495e" textLength="22" lengthAdjust="spacingAndGlyphs">txt</text><text x="1835.8" y="105.5" font-family="Liberation Sans" font-weight="700" font-size="16.5" fill="#34495e" textLength="27.5" lengthAdjust="spacingAndGlyphs">xml</text><path d="M1823.5,126.5 Q1835,132 1842,124.5 L1846.5,118.5 L1837.5,113.8 L1854,104.8 L1859.8,123.8 L1851,119.5 Q1846,131 1836,133.5 Q1828,134.5 1823.5,126.5 Z" fill="#ff8060" stroke="#d06048" stroke-width="1"/><rect x="1890.8" y="78.7" width="30.6" height="17" rx="4" fill="#e8e8f0" stroke="#a4a4b8" stroke-width="1.7"/><rect x="1891.8" y="84.7" width="28.6" height="4.5" fill="#ffffff"/><rect x="1896.8" y="69.7" width="18.5" height="15" fill="#fff" stroke="#a4a4b8" stroke-width="1.7"/><line x1="1896.8" y1="84.7" x2="1915.3" y2="84.7" stroke="#8a8aa0" stroke-width="1.7"/><rect x="1896.8" y="91.2" width="18.5" height="9" fill="#fff" stroke="#a4a4b8" stroke-width="1.7"/><rect x="1899.5" y="73.4" width="12" height="1.4" fill="#c4c4d0"/><rect x="1899.5" y="77.4" width="10" height="1.4" fill="#c4c4d0"/><rect x="1890.8" y="120.5" width="30.6" height="17" rx="4" fill="#e8e8f0" stroke="#a4a4b8" stroke-width="1.7"/><rect x="1891.8" y="126.5" width="28.6" height="4.5" fill="#ffffff"/><rect x="1896.8" y="111.5" width="18.5" height="15" fill="#fff" stroke="#a4a4b8" stroke-width="1.7"/><line x1="1896.8" y1="126.5" x2="1915.3" y2="126.5" stroke="#8a8aa0" stroke-width="1.7"/><rect x="1896.8" y="133" width="18.5" height="9" fill="#fff" stroke="#a4a4b8" stroke-width="1.7"/><rect x="1899.5" y="115.2" width="12" height="1.4" fill="#c4c4d0"/><rect x="1899.5" y="119.2" width="10" height="1.4" fill="#c4c4d0"/><circle cx="1898.8" cy="134.3" r="8" fill="#506880" stroke="#34495e" stroke-width="1.4"/><polyline points="1894.8,134.5 1897.8,137.5 1903.3,131.5" fill="none" stroke="#fff" stroke-width="1.9"/><rect x="1943.5" y="77.8" width="31" height="23" fill="#e6e6f0" stroke="#9e9eb4" stroke-width="1.6"/><polyline points="1944,78.5 1959,92 1974,78.5" fill="none" stroke="#9e9eb4" stroke-width="1.6"/><polyline points="1944,100.5 1955,89.5 M1974,100.5 1963,89.5" fill="none" stroke="#9e9eb4" stroke-width="1.2"/><polygon points="1978.3,84 1988,84 1983.15,91" fill="#000"/><rect x="1942" y="111" width="31.7" height="31.4" fill="#eac8c0"/><text x="1950" y="135.5" font-family="Liberation Sans" font-weight="700" font-size="21" fill="#fff">P</text><rect x="1997.2" y="111" width="31.8" height="31.4" fill="#bcc8d8"/><text x="2002" y="135.5" font-family="Liberation Sans" font-weight="700" font-size="20" fill="#fff">W</text><polygon points="2051.6,118.6 2064.9,110.9 2078,118.6 2069.4,123.6 2064.9,121.1 2060.5,123.6" fill="#465e78"/><polygon points="2051.1,123.6 2058.6,127.5 2058.6,130.3 2062.7,132.5 2062.7,142.7 2051.1,136.6" fill="#465e78"/><polygon points="2078.8,123.6 2071.3,127.5 2071.3,130.3 2067.1,132.5 2067.1,142.7 2078.8,136.6" fill="#465e78"/><polygon points="2083.5,126.3 2092.7,126.3 2088.1,133.2" fill="#000"/><defs><linearGradient id="gs" x1="0" y1="0" x2="1" y2="1"><stop offset="0" stop-color="#c8c8c8"/><stop offset="0.5" stop-color="#a0a0a0"/><stop offset="1" stop-color="#c0c0c0"/></linearGradient></defs><rect x="2117" y="72.7" width="27.5" height="28.3" rx="4" fill="url(#gs)"/><polygon points="2124,73 2138,73 2131,87" fill="#d4d4d4" opacity="0.8"/><polygon points="2124,101 2138,101 2131,87" fill="#909090" opacity="0.7"/><circle cx="2132.8" cy="126.7" r="15.9" fill="#4e6882"/><text x="2125" y="137.3" font-family="Liberation Sans" font-weight="700" font-size="27" fill="#fff" stroke="#fff" stroke-width="0.8" textLength="14.5" lengthAdjust="spacingAndGlyphs">?</text><polygon points="2153,126.3 2163,126.3 2158.0,133.2" fill="#000"/><text x="2174" y="122.6" font-family="Liberation Sans" font-weight="700" font-size="52" fill="#8a8a8a" textLength="134" lengthAdjust="spacingAndGlyphs" style="filter:blur(1px)">Prism</text><text x="2243" y="87.6" font-family="Liberation Sans" font-weight="700" font-size="15" fill="#8c8c8c" textLength="62" lengthAdjust="spacingAndGlyphs" style="filter:blur(0.5px)"><tspan>Graph</tspan><tspan fill="#b4b4b4">Pad</tspan></text></svg>
<div style="position:absolute;left:11px;top:175px;width:453px;height:40px;background:#ffffff;box-sizing:border-box;border:1.3px solid #6a6a6a"></div>
<div id="t_9cffe2bd73" class="tx" style="left:20.4px;top:183.43px;font-size:25px;line-height:25px;font-weight:400;font-style:normal;color:#555555;font-family:'Liberation Sans',sans-serif;transform:translateX(-0.42px) scaleX(0.8710);transform-origin:0 0;">Search...</div>
<div style="position:absolute;left:1px;top:577px;width:473px;height:44px;background:#efefef;"></div>
<div style="position:absolute;left:1px;top:1132px;width:473px;height:44px;background:#efefef;"></div>
<div style="position:absolute;left:1px;top:401px;width:473px;height:2px;background:#d0d0d0;"></div>
<div style="position:absolute;left:1px;top:533px;width:473px;height:2px;background:#d0d0d0;"></div>
<div style="position:absolute;left:1px;top:709px;width:473px;height:2px;background:#d0d0d0;"></div>
<svg style="position:absolute;left:0px;top:165px;" width="480" height="1390" viewBox="0 0 480 1390"><g transform="translate(0,-165)"><polyline points="10.5,242 18.75,250.5 27,242" fill="none" stroke="#444" stroke-width="2.6"/><polyline points="45.5,286.5 53.75,295 62,286.5" fill="none" stroke="#444" stroke-width="2.6"/><polyline points="441.5,192.5 447.75,199 454,192.5" fill="none" stroke="#555" stroke-width="1.5"/><polyline points="10.5,418 18.75,426.5 27,418" fill="none" stroke="#444" stroke-width="2.6"/><polyline points="10.5,550.3 18.75,558.5 27,550.3" fill="none" stroke="#444" stroke-width="2.6"/><polyline points="10.5,726.5 18.75,735 27,726.5" fill="none" stroke="#444" stroke-width="2.6"/><g fill="none" stroke="#000" stroke-width="3.3" stroke-linejoin="miter"><polyline points="452.2,245.1 456.8,249.4 452.2,253.70000000000002"/><polyline points="458.4,245.1 463,249.4 458.4,253.70000000000002"/></g><g fill="none" stroke="#000" stroke-width="3.3" stroke-linejoin="miter"><polyline points="452.2,420.9 456.8,425.2 452.2,429.5"/><polyline points="458.4,420.9 463,425.2 458.4,429.5"/></g><g fill="none" stroke="#000" stroke-width="3.3" stroke-linejoin="miter"><polyline points="452.2,553.6 456.8,557.9 452.2,562.1999999999999"/><polyline points="458.4,553.6 463,557.9 458.4,562.1999999999999"/></g><g fill="none" stroke="#000" stroke-width="3.3" stroke-linejoin="miter"><polyline points="452.2,729.6 456.8,733.9 452.2,738.1999999999999"/><polyline points="458.4,729.6 463,733.9 458.4,738.1999999999999"/></g><g fill="none" stroke="#000" stroke-width="3.3" stroke-linejoin="miter"><polyline points="452.2,1108.2 456.8,1112.5 452.2,1116.8"/><polyline points="458.4,1108.2 463,1112.5 458.4,1116.8"/></g><rect x="76.5" y="277.5" width="26" height="26" fill="#fff" stroke="#a4a4a4" stroke-width="1.6"/><rect x="77.5" y="278.5" width="24" height="6.5" fill="#c6defa"/><g stroke="#a4a4a4" stroke-width="1.5"><line x1="81.7" y1="277.5" x2="81.7" y2="303.5"/><line x1="96.4" y1="277.5" x2="96.4" y2="303.5"/><line x1="76.5" y1="285.3" x2="102.5" y2="285.3"/><line x1="76.5" y1="295.3" x2="102.5" y2="295.3"/></g><rect x="111.5" y="320" width="24" height="23" rx="3" fill="#c8dcf8" stroke="#a8a8a8" stroke-width="1.5"/><rect x="116" y="324.5" width="23.5" height="23" rx="3" fill="#fff" stroke="#a0a0a0" stroke-width="1.6"/><rect x="120.5" y="331.5" width="14" height="2.6" fill="#909090"/><rect x="120.5" y="336.8" width="14" height="2.6" fill="#909090"/><circle cx="53.6" cy="377.4" r="12.3" fill="none" stroke="#8c8c8c" stroke-width="1.6"/><line x1="46.6" y1="377.4" x2="60.6" y2="377.4" stroke="#7a7a7a" stroke-width="1.4"/><line x1="53.6" y1="370.4" x2="53.6" y2="384.4" stroke="#7a7a7a" stroke-width="1.4"/><circle cx="53.6" cy="509.2" r="12.3" fill="none" stroke="#8c8c8c" stroke-width="1.6"/><line x1="46.6" y1="509.2" x2="60.6" y2="509.2" stroke="#7a7a7a" stroke-width="1.4"/><line x1="53.6" y1="502.2" x2="53.6" y2="516.2" stroke="#7a7a7a" stroke-width="1.4"/><circle cx="53.6" cy="685.3" r="12.3" fill="none" stroke="#8c8c8c" stroke-width="1.6"/><line x1="46.6" y1="685.3" x2="60.6" y2="685.3" stroke="#7a7a7a" stroke-width="1.4"/><line x1="53.6" y1="678.3" x2="53.6" y2="692.3" stroke="#7a7a7a" stroke-width="1.4"/><circle cx="53.6" cy="773.3" r="12.3" fill="none" stroke="#8c8c8c" stroke-width="1.6"/><line x1="46.6" y1="773.3" x2="60.6" y2="773.3" stroke="#7a7a7a" stroke-width="1.4"/><line x1="53.6" y1="766.3" x2="53.6" y2="780.3" stroke="#7a7a7a" stroke-width="1.4"/><circle cx="54.5" cy="466.2" r="13.3" fill="none" stroke="#8c8c8c" stroke-width="1.6"/><rect x="53" y="457" width="3.3" height="3.4" fill="#4a90e2"/><rect x="53" y="463.3" width="3.3" height="11" fill="#4a90e2"/><rect x="50.5" y="472.5" width="8" height="2" fill="#4a90e2"/><rect x="51" y="463.3" width="3" height="1.6" fill="#4a90e2"/><g transform="translate(39.3,583.3) scale(1.0)"><rect x="0.5" y="0.5" width="29.5" height="30" fill="#fff" stroke="#d4d4d4" stroke-width="1.2"/><polyline points="4.3,3.5 4.3,26.5 27,26.5" fill="none" stroke="#8484ac" stroke-width="1.6"/><polyline points="5,24.5 11.8,7.5 22,20 26.5,12" fill="none" stroke="#e070f0" stroke-width="1.5"/><circle cx="11.8" cy="7.5" r="1.2" fill="#34495e"/><circle cx="22" cy="20" r="1.2" fill="#34495e"/><circle cx="26.5" cy="12" r="1.2" fill="#34495e"/></g><g transform="translate(39.3,627.3) scale(1.0)"><rect x="0.5" y="0.5" width="29.5" height="30" fill="#fff" stroke="#d4d4d4" stroke-width="1.2"/><polyline points="4.3,3.5 4.3,26.5 27,26.5" fill="none" stroke="#8484ac" stroke-width="1.6"/><polyline points="5,24.5 11.8,7.5 22,20 26.5,12" fill="none" stroke="#e070f0" stroke-width="1.5"/><circle cx="11.8" cy="7.5" r="1.2" fill="#34495e"/><circle cx="22" cy="20" r="1.2" fill="#34495e"/><circle cx="26.5" cy="12" r="1.2" fill="#34495e"/></g><g transform="translate(39.3,1138.5) scale(1.0)"><rect x="0.5" y="0.5" width="29.5" height="30" fill="#fff" stroke="#d4d4d4" stroke-width="1.2"/><polyline points="4.3,3.5 4.3,26.5 27,26.5" fill="none" stroke="#8484ac" stroke-width="1.6"/><polyline points="5,24.5 11.8,7.5 22,20 26.5,12" fill="none" stroke="#e070f0" stroke-width="1.5"/><circle cx="11.8" cy="7.5" r="1.2" fill="#34495e"/><circle cx="22" cy="20" r="1.2" fill="#34495e"/><circle cx="26.5" cy="12" r="1.2" fill="#34495e"/></g></g></svg>
<div id="t_0958275097" class="tx" style="left:41.9px;top:234.46px;font-size:26.5px;line-height:26.5px;font-weight:400;font-style:normal;color:#111;font-family:'Liberation Sans',sans-serif;transform:translateX(-2.66px) scaleX(1.0247);transform-origin:0 0;">Data with Results</div>
<div id="t_4d3a4d7b87" class="tx" style="left:115.3px;top:281.00px;font-size:22.8px;line-height:22.8px;font-weight:700;font-style:normal;color:#000;font-family:'Liberation Sans',sans-serif;transform:translateX(-0.24px) scaleX(1.0535);transform-origin:0 0;">Col: Unpaired t test</div>
<div id="t_bc8b052978" class="tx" style="left:151px;top:324.70px;font-size:22.8px;line-height:22.8px;font-weight:700;font-style:normal;color:#000;font-family:'Liberation Sans',sans-serif;transform:translateX(-1.07px) scaleX(1.0692);transform-origin:0 0;">Unpaired t test</div>
<div id="t_1db123b866" class="tx" style="left:79px;top:368.70px;font-size:22.8px;line-height:22.8px;font-weight:400;font-style:italic;color:#000;font-family:'Liberation Sans',sans-serif;transform:translateX(-1.02px) scaleX(1.0226);transform-origin:0 0;">New Data Table...</div>
<div id="t_218ed3b6f9" class="tx" style="left:40.8px;top:409.96px;font-size:26.5px;line-height:26.5px;font-weight:400;font-style:normal;color:#111;font-family:'Liberation Sans',sans-serif;transform:translateX(-2.40px) scaleX(1.0881);transform-origin:0 0;">Info</div>
<div id="t_f4ebe285ce" class="tx" style="left:78.6px;top:456.70px;font-size:22.8px;line-height:22.8px;font-weight:400;font-style:normal;color:#000;font-family:'Liberation Sans',sans-serif;transform:translateX(-2.52px) scaleX(1.0719);transform-origin:0 0;">Project info 1</div>
<div id="t_e2d9581f76" class="tx" style="left:79px;top:501.10px;font-size:22.8px;line-height:22.8px;font-weight:400;font-style:italic;color:#000;font-family:'Liberation Sans',sans-serif;transform:translateX(-1.00px) scaleX(1.0000);transform-origin:0 0;">New Info...</div>
<div id="t_b300b083f9" class="tx" style="left:39.5px;top:541.76px;font-size:26.5px;line-height:26.5px;font-weight:400;font-style:normal;color:#111;font-family:'Liberation Sans',sans-serif;transform:translateX(-1.00px) scaleX(1.0000);transform-origin:0 0;">Graphs</div>
<div id="t_55a21e97a2" class="tx" style="left:78.6px;top:589.10px;font-size:22.8px;line-height:22.8px;font-weight:400;font-style:normal;color:#000;font-family:'Liberation Sans',sans-serif;transform:translateX(-1.47px) scaleX(1.0515);transform-origin:0 0;">Col: Unpaired t test</div>
<div id="t_dfaaabe2d7" class="tx" style="left:79px;top:632.90px;font-size:22.8px;line-height:22.8px;font-weight:700;font-style:normal;color:#000;font-family:'Liberation Sans',sans-serif;transform:translateX(-2.07px) scaleX(1.0606);transform-origin:0 0;">Estimation Plot: Unpaired t test of</div>
<div id="t_654ca7d17e" class="tx" style="left:79px;top:676.30px;font-size:22.8px;line-height:22.8px;font-weight:400;font-style:italic;color:#000;font-family:'Liberation Sans',sans-serif;transform:translateX(-1.00px) scaleX(1.0032);transform-origin:0 0;">New Graph...</div>
<div id="t_abd614726f" class="tx" style="left:40.8px;top:717.76px;font-size:26.5px;line-height:26.5px;font-weight:400;font-style:normal;color:#111;font-family:'Liberation Sans',sans-serif;transform:translateX(-2.21px) scaleX(1.0001);transform-origin:0 0;">Layouts</div>
<div id="t_abab44b381" class="tx" style="left:79px;top:764.30px;font-size:22.8px;line-height:22.8px;font-weight:400;font-style:italic;color:#000;font-family:'Liberation Sans',sans-serif;transform:translateX(-1.00px) scaleX(1.0074);transform-origin:0 0;">New Layout...</div>
<div id="t_1d88586202" class="tx" style="left:40px;top:1097.26px;font-size:26.5px;line-height:26.5px;font-weight:400;font-style:normal;color:#111;font-family:'Liberation Sans',sans-serif;transform:translateX(-2.03px) scaleX(1.0080);transform-origin:0 0;">Family</div>
<div id="t_7f69e18622" class="tx" style="left:78.8px;top:1144.40px;font-size:22.8px;line-height:22.8px;font-weight:700;font-style:normal;color:#000;font-family:'Liberation Sans',sans-serif;transform:translateX(-1.26px) scaleX(1.0538);transform-origin:0 0;">Col: Unpaired t test</div>
<div style="position:absolute;left:1px;top:1048px;width:473px;height:32px;background:#f0f0f0;"></div>
<div style="position:absolute;left:35px;top:1048px;width:276px;height:32px;background:#cdcdcd;"></div>
<svg style="position:absolute;left:0px;top:1040px;" width="480" height="50" viewBox="0 0 480 50"><g transform="translate(0,-1040)"><polyline points="22,1059 13.5,1064.3 22,1069.6" fill="none" stroke="#606060" stroke-width="2.6"/><polyline points="452,1059 460.5,1064.3 452,1069.6" fill="none" stroke="#606060" stroke-width="2.6"/></g></svg>
<div style="position:absolute;left:1px;top:1080px;width:473px;height:9px;background:#a6a6a6;box-sizing:border-box;border-top:1.5px solid #8a8a8a;border-bottom:1.5px solid #8a8a8a"></div>
<div style="position:absolute;left:224px;top:1082.5px;width:26px;height:1px;background:#d8d8d8;"></div>
<div style="position:absolute;left:224px;top:1085px;width:26px;height:1px;background:#d8d8d8;"></div>
<div style="position:absolute;left:476px;top:610px;width:1px;height:26px;background:#9c9c9c;"></div>
<div style="position:absolute;left:478px;top:610px;width:1px;height:26px;background:#9c9c9c;"></div>
<div style="position:absolute;left:476px;top:1304px;width:1px;height:26px;background:#9c9c9c;"></div>
<div style="position:absolute;left:478px;top:1304px;width:1px;height:26px;background:#9c9c9c;"></div>
<div style="position:absolute;left:732px;top:263px;width:1203px;height:1153px;background:#f0f0f0;box-sizing:border-box;border:2px solid #646464;box-shadow:0 0 16px 2px rgba(0,0,0,0.22)"></div>
<div style="position:absolute;left:734px;top:265px;width:1199px;height:56px;background:#ffffff;"></div>
<div id="t_a2a4d07c2f" class="tx" style="left:747.5px;top:281.63px;font-size:24.3px;line-height:24.3px;font-weight:400;font-style:normal;color:#000;font-family:'Liberation Sans',sans-serif;transform:translateX(-1.95px) scaleX(0.9676);transform-origin:0 0;">Change Graph Type</div>
<div style="position:absolute;left:941px;top:352px;width:435px;height:33px;background:#e1e1e1;box-sizing:border-box;border:1px solid #adadad"></div>
<div id="t_35045007c9" class="tx" style="left:764px;top:361.00px;font-size:22.8px;line-height:22.8px;font-weight:700;font-style:normal;color:#000;font-family:'Liberation Sans',sans-serif;transform:translateX(-0.98px) scaleX(0.9819);transform-origin:0 0;">Graph family:</div>
<div id="t_fb78bb22f8" class="tx" style="left:945px;top:358.71px;font-size:21.6px;line-height:21.6px;font-weight:400;font-style:normal;color:#000;font-family:'Liberation Sans',sans-serif;transform:translateX(-0.97px) scaleX(0.9722);transform-origin:0 0;">Column</div>
<div style="position:absolute;left:733px;top:456px;width:5px;height:1px;background:#8a8a8a;"></div>
<div style="position:absolute;left:738px;top:419px;width:397px;height:38px;background:#f0f0f0;box-sizing:border-box;border:1px solid #8a8a8a;border-bottom:none"></div>
<div style="position:absolute;left:1134px;top:421px;width:397px;height:36px;background:linear-gradient(#f6f6f6 0%, #f4f4f4 45%, #dddddd 58%, #dcdcdc 100%);box-sizing:border-box;border:1px solid #8a8a8a"></div>
<div style="position:absolute;left:1530px;top:421px;width:397px;height:36px;background:linear-gradient(#f6f6f6 0%, #f4f4f4 45%, #dddddd 58%, #dcdcdc 100%);box-sizing:border-box;border:1px solid #8a8a8a"></div>
<div style="position:absolute;left:1926px;top:456px;width:7px;height:1px;background:#8a8a8a;"></div>
<div id="t_2fc8778e62" class="tx" style="left:847.6px;top:430.04px;font-size:21.8px;line-height:21.8px;font-weight:700;font-style:normal;color:#000;font-family:'Liberation Sans',sans-serif;transform:translateX(-1.63px) scaleX(1.0207);transform-origin:0 0;">Individual values</div>
<div id="t_07178afb6c" class="tx" style="left:1259px;top:430.34px;font-size:21.8px;line-height:21.8px;font-weight:700;font-style:normal;color:#000;font-family:'Liberation Sans',sans-serif;transform:translateX(-0.99px) scaleX(0.9904);transform-origin:0 0;">Box and violin</div>
<div id="t_a428e236d1" class="tx" style="left:1615.7px;top:429.54px;font-size:21.8px;line-height:21.8px;font-weight:700;font-style:normal;color:#000;font-family:'Liberation Sans',sans-serif;transform:translateX(-1.26px) scaleX(1.0410);transform-origin:0 0;">Mean/median &amp; error</div>
<div style="position:absolute;left:764px;top:471px;width:1140px;height:187px;background:#ebebeb;box-sizing:border-box;border:1px solid #c6c6c6;border-radius:3px;box-shadow:0 1px 2px rgba(0,0,0,0.12)"></div>
<div style="position:absolute;left:770px;top:619px;width:1128px;height:1px;background:#ffffff;"></div>
<div style="position:absolute;left:770px;top:620px;width:1128px;height:32px;background:#f2f2f2;"></div>
<div style="position:absolute;left:780px;top:487px;width:156px;height:121px;background:#bddaf1;box-sizing:border-box;border:1px solid #93c6ef"></div>
<div id="t_6024dc0974" class="tx" style="left:785.5px;top:670.74px;font-size:21.8px;line-height:21.8px;font-weight:700;font-style:normal;color:#000;font-family:'Liberation Sans',sans-serif;transform:translateX(-1.01px) scaleX(1.0270);transform-origin:0 0;">Scatter plot</div>
<div id="t_8d4bbcd888" class="tx" style="left:786px;top:712.04px;font-size:21.8px;line-height:21.8px;font-weight:700;font-style:normal;color:#000;font-family:'Liberation Sans',sans-serif;transform:translateX(-1.04px) scaleX(1.0393);transform-origin:0 0;">Plot:</div>
<div style="position:absolute;left:887px;top:703px;width:423px;height:33px;background:#e1e1e1;box-sizing:border-box;border:1px solid #adadad"></div>
<div id="t_a153268dcd" class="tx" style="left:891.8px;top:709.71px;font-size:21.6px;line-height:21.6px;font-weight:400;font-style:normal;color:#000;font-family:'Liberation Sans',sans-serif;transform:translateX(-1.74px) scaleX(0.9530);transform-origin:0 0;">Median</div>
<div style="position:absolute;left:887px;top:762px;width:25px;height:25px;background:#ffffff;box-sizing:border-box;border:2px solid #333"></div>
<div id="t_481687de7d" class="tx" style="left:918.2px;top:764.61px;font-size:21.6px;line-height:21.6px;font-weight:400;font-style:normal;color:#000;font-family:'Liberation Sans',sans-serif;transform:translateX(-1.20px) scaleX(1.0008);transform-origin:0 0;">Set as default for Scatter plot</div>
<div id="t_f9746b95e9" class="tx" style="left:975px;top:804.54px;font-size:21.8px;line-height:21.8px;font-weight:700;font-style:normal;color:#000;font-family:'Liberation Sans',sans-serif;transform:translateX(-0.99px) scaleX(1.0074);transform-origin:0 0;">Preview</div>
<div style="position:absolute;left:974px;top:837px;width:720px;height:478px;background:#ffffff;box-sizing:border-box;border:1px solid #c4c4c4"></div>
<div id="t_1e80a64399" class="tx" style="left:1224.7px;top:860.04px;font-size:28px;line-height:28px;font-weight:700;font-style:normal;color:#000;font-family:'Liberation Sans',sans-serif;transform:translateX(-1.21px) scaleX(1.0048);transform-origin:0 0;">Col: Unpaired t test</div>
<svg style="position:absolute;left:0px;top:0px;pointer-events:none" width="2436" height="1628" viewBox="0 0 2436 1628"><g stroke="#9a9a9a" stroke-width="1.4"><line x1="1891.5" y1="282.5" x2="1911" y2="302"/><line x1="1911" y1="282.5" x2="1891.5" y2="302"/></g><polyline points="1352.5,366.5 1359.3,373.2 1366,366.5" fill="none" stroke="#555" stroke-width="1.5"/><polyline points="791.5,631.5 784,636.5 791.5,641.5" fill="none" stroke="#b4b4b4" stroke-width="2.2"/><polyline points="1876.5,632 1884,636.7 1876.5,641.5" fill="none" stroke="#b4b4b4" stroke-width="2.2"/><polyline points="800.6,501 800.6,594 916,594" fill="none" stroke="#000" stroke-width="2"/><circle cx="830" cy="514.6" r="6.1" fill="#000"/><circle cx="822" cy="538.5" r="6.1" fill="#000"/><circle cx="841.9" cy="532.9" r="6.1" fill="#000"/><circle cx="822" cy="564.8" r="6.1" fill="#000"/><circle cx="841.9" cy="560.8" r="6.1" fill="#000"/><circle cx="830" cy="582.6" r="6.1" fill="#000"/><circle cx="883.9" cy="510.9" r="6.1" fill="#000"/><circle cx="875.9" cy="532.9" r="6.1" fill="#000"/><circle cx="895.8" cy="527" r="6.1" fill="#000"/><circle cx="875.9" cy="555" r="6.1" fill="#000"/><circle cx="895.8" cy="561" r="6.1" fill="#000"/><circle cx="883.9" cy="575.1" r="6.1" fill="#000"/><line x1="816" y1="549.8" x2="848" y2="549.8" stroke="#000" stroke-width="1.8"/><line x1="870" y1="543.7" x2="902" y2="543.7" stroke="#000" stroke-width="1.8"/><rect x="977.5" y="550.5" width="41" height="43" fill="#c0c0c0" stroke="#000" stroke-width="1.8"/><rect x="1027.5" y="546.5" width="41.5" height="47" fill="#c0c0c0" stroke="#000" stroke-width="1.8"/><polyline points="966.9,501 966.9,594 1081.7,594" fill="none" stroke="#000" stroke-width="2"/><circle cx="997.8" cy="516.7" r="6.1" fill="#000"/><circle cx="988" cy="534.5" r="6.1" fill="#000"/><circle cx="1007.9" cy="538.5" r="6.1" fill="#000"/><circle cx="988" cy="564.8" r="6.1" fill="#000"/><circle cx="1007.9" cy="560.8" r="6.1" fill="#000"/><circle cx="997.8" cy="582.6" r="6.1" fill="#000"/><circle cx="1043.7" cy="512.7" r="6.1" fill="#000"/><circle cx="1057.8" cy="527" r="6.1" fill="#000"/><circle cx="1037.9" cy="534.5" r="6.1" fill="#000"/><circle cx="1037.9" cy="556.8" r="6.1" fill="#000"/><circle cx="1057.8" cy="564.8" r="6.1" fill="#000"/><circle cx="1043.7" cy="578.9" r="6.1" fill="#000"/><polyline points="1132.8,501 1132.8,594 1247.5,594" fill="none" stroke="#000" stroke-width="2"/><g stroke="#000" stroke-width="1.8"><line x1="1159.1" y1="513.9" x2="1225.9" y2="532.9"/><line x1="1159.1" y1="566" x2="1225.9" y2="547.2"/><line x1="1159.1" y1="581.4" x2="1225.9" y2="581.2"/></g><rect x="1153.8999999999999" y="508.7" width="10.4" height="10.4" fill="#000"/><rect x="1153.8999999999999" y="560.8" width="10.4" height="10.4" fill="#000"/><rect x="1153.8999999999999" y="576.1999999999999" width="10.4" height="10.4" fill="#000"/><circle cx="1225.9" cy="532.9" r="6.1" fill="#000"/><circle cx="1225.9" cy="547.2" r="6.1" fill="#000"/><circle cx="1225.9" cy="581.2" r="6.1" fill="#000"/><polyline points="1298.6,501 1298.6,594 1413.7,594" fill="none" stroke="#000" stroke-width="2"/><circle cx="1325.8" cy="520.6" r="5.9" fill="#000"/><circle cx="1343.8" cy="512.7" r="5.9" fill="#000"/><circle cx="1347.9" cy="532.8" r="5.9" fill="#000"/><circle cx="1369.8" cy="512.7" r="5.9" fill="#000"/><circle cx="1375.8" cy="532.8" r="5.9" fill="#000"/><circle cx="1393.8" cy="520.6" r="5.9" fill="#000"/><circle cx="1313.8" cy="566.7" r="5.9" fill="#000"/><circle cx="1333.7" cy="558.8" r="5.9" fill="#000"/><circle cx="1327.7" cy="578.7" r="5.9" fill="#000"/><circle cx="1355.8" cy="558.8" r="5.9" fill="#000"/><circle cx="1361.6" cy="578.7" r="5.9" fill="#000"/><circle cx="1377.7" cy="566.7" r="5.9" fill="#000"/><line x1="1358.8" y1="507" x2="1358.8" y2="538.6" stroke="#000" stroke-width="1.8"/><line x1="1344.9" y1="552.8" x2="1344.9" y2="585" stroke="#000" stroke-width="1.8"/><rect x="1465" y="506" width="50" height="40" fill="#c0c0c0" stroke="#000" stroke-width="1.8"/><rect x="1465" y="550" width="46" height="40" fill="#c0c0c0" stroke="#000" stroke-width="1.8"/><polyline points="1464.7,501 1464.7,594 1580,594" fill="none" stroke="#000" stroke-width="2"/><circle cx="1481.9" cy="520.6" r="5.9" fill="#000"/><circle cx="1504" cy="516.5" r="5.9" fill="#000"/><circle cx="1495.8" cy="534.5" r="5.9" fill="#000"/><circle cx="1527.7" cy="516.5" r="5.9" fill="#000"/><circle cx="1549.8" cy="522.7" r="5.9" fill="#000"/><circle cx="1533.7" cy="534.5" r="5.9" fill="#000"/><circle cx="1475.6" cy="568.9" r="5.9" fill="#000"/><circle cx="1493.9" cy="560.7" r="5.9" fill="#000"/><circle cx="1497.7" cy="578.7" r="5.9" fill="#000"/><circle cx="1527.7" cy="560.7" r="5.9" fill="#000"/><circle cx="1545.7" cy="568.9" r="5.9" fill="#000"/><circle cx="1523.9" cy="578.7" r="5.9" fill="#000"/><polyline points="1630.6,501 1630.6,594 1745.7,594" fill="none" stroke="#000" stroke-width="2"/><g stroke="#000" stroke-width="1.8"><line x1="1675.6" y1="512.7" x2="1656.5" y2="582"/><line x1="1689.8" y1="512.7" x2="1708.8" y2="582"/><line x1="1723.9" y1="512.7" x2="1724.7" y2="582"/></g><circle cx="1675.6" cy="512.7" r="5.9" fill="#000"/><circle cx="1689.8" cy="512.7" r="5.9" fill="#000"/><circle cx="1723.9" cy="512.7" r="5.9" fill="#000"/><rect x="1651.3" y="576.8" width="10.4" height="10.4" fill="#000"/><rect x="1703.6" y="576.8" width="10.4" height="10.4" fill="#000"/><rect x="1719.5" y="576.8" width="10.4" height="10.4" fill="#000"/><polyline points="1287,717 1293.6,723.6 1300.2,717" fill="none" stroke="#555" stroke-width="1.5"/><line x1="1134.7" y1="921.5" x2="1134.7" y2="1217.7" stroke="#000" stroke-width="2.6"/><line x1="1121.5" y1="1216.5" x2="1576" y2="1216.5" stroke="#000" stroke-width="2.6"/><line x1="1121.5" y1="922.8" x2="1134.7" y2="922.8" stroke="#000" stroke-width="2.6"/><line x1="1121.5" y1="981.5" x2="1134.7" y2="981.5" stroke="#000" stroke-width="2.6"/><line x1="1121.5" y1="1040.2" x2="1134.7" y2="1040.2" stroke="#000" stroke-width="2.6"/><line x1="1121.5" y1="1098.9" x2="1134.7" y2="1098.9" stroke="#000" stroke-width="2.6"/><line x1="1121.5" y1="1157.6" x2="1134.7" y2="1157.6" stroke="#000" stroke-width="2.6"/><line x1="1121.5" y1="1216.5" x2="1134.7" y2="1216.5" stroke="#000" stroke-width="2.6"/><line x1="1259" y1="1216.5" x2="1259" y2="1229" stroke="#000" stroke-width="2.6"/><line x1="1448" y1="1216.5" x2="1448" y2="1229" stroke="#000" stroke-width="2.6"/><line x1="1197" y1="1084" x2="1323" y2="1084" stroke="#000" stroke-width="3"/><circle cx="1248" cy="1058" r="6.3" fill="#000"/><circle cx="1271.6" cy="1058" r="6.3" fill="#000"/><circle cx="1248" cy="1084" r="6.3" fill="#000"/><circle cx="1271.6" cy="1084" r="6.3" fill="#000"/><circle cx="1260" cy="1148.75" r="6.3" fill="#000"/><line x1="1385.6" y1="1053.4" x2="1511.6" y2="1053.4" stroke="#f0106e" stroke-width="3"/><circle cx="1448" cy="990.3" r="6.3" fill="#f0106e"/><circle cx="1436.6" cy="1026" r="6.3" fill="#f0106e"/><circle cx="1460" cy="1026" r="6.3" fill="#f0106e"/><circle cx="1436.6" cy="1081.6" r="6.3" fill="#f0106e"/><circle cx="1460" cy="1090" r="6.3" fill="#f0106e"/><circle cx="1448" cy="1116.6" r="6.3" fill="#f0106e"/><circle cx="1822.9" cy="1035.4" r="23.8" fill="#939393"/><polygon points="1814.5,1021.5 1834.5,1035.5 1814.5,1049.5" fill="#fff"/></svg>
<div id="t_b6e46ca63b" class="tx" style="top:912.14px;font-size:21.8px;line-height:21.8px;font-weight:700;font-style:normal;color:#000;font-family:'Liberation Sans',sans-serif;right:1318.5px;">100</div>
<div id="t_7e56e8a35b" class="tx" style="top:970.84px;font-size:21.8px;line-height:21.8px;font-weight:700;font-style:normal;color:#000;font-family:'Liberation Sans',sans-serif;right:1318.5px;">80</div>
<div id="t_07830f8d4c" class="tx" style="top:1029.54px;font-size:21.8px;line-height:21.8px;font-weight:700;font-style:normal;color:#000;font-family:'Liberation Sans',sans-serif;right:1318.5px;">60</div>
<div id="t_33eb639e16" class="tx" style="top:1088.24px;font-size:21.8px;line-height:21.8px;font-weight:700;font-style:normal;color:#000;font-family:'Liberation Sans',sans-serif;right:1318.5px;">40</div>
<div id="t_75c782ba60" class="tx" style="top:1146.94px;font-size:21.8px;line-height:21.8px;font-weight:700;font-style:normal;color:#000;font-family:'Liberation Sans',sans-serif;right:1318.5px;">20</div>
<div id="t_1b471da461" class="tx" style="top:1205.84px;font-size:21.8px;line-height:21.8px;font-weight:700;font-style:normal;color:#000;font-family:'Liberation Sans',sans-serif;right:1318.5px;">0</div>
<div id="t_041f12ccc3" class="tx" style="left:1235px;top:1233.44px;font-size:21.8px;line-height:21.8px;font-weight:700;font-style:normal;color:#000;font-family:'Liberation Sans',sans-serif;transform:translateX(-1.02px) scaleX(1.0213);transform-origin:0 0;">Male</div>
<div id="t_7db7b13b05" class="tx" style="left:1410px;top:1233.44px;font-size:21.8px;line-height:21.8px;font-weight:700;font-style:normal;color:#000;font-family:'Liberation Sans',sans-serif;transform:translateX(-1.03px) scaleX(1.0326);transform-origin:0 0;">Female</div>
<div style="position:absolute;left:1560px;top:1353px;width:148px;height:42px;background:#e1e1e1;box-sizing:border-box;border:1px solid #adadad"></div>
<div style="position:absolute;left:1740px;top:1353px;width:148px;height:42px;background:#e1e1e1;box-sizing:border-box;border:2px solid #0078d7"></div>
<div id="t_075b86546d" class="tx" style="left:1613.4px;top:1363.17px;font-size:22px;line-height:22px;font-weight:400;font-style:normal;color:#000;font-family:'Liberation Sans',sans-serif;transform:translateX(-1.38px) scaleX(0.9871);transform-origin:0 0;">Help</div>
<div id="t_ef7f6a3651" class="tx" style="left:1800px;top:1363.17px;font-size:22px;line-height:22px;font-weight:400;font-style:normal;color:#000;font-family:'Liberation Sans',sans-serif;transform:translateX(-0.90px) scaleX(0.9000);transform-origin:0 0;">OK</div>
<svg style="position:absolute;left:0px;top:1540px;" width="2436" height="88" viewBox="0 0 2436 88"><g transform="translate(0,-1540)"><rect x="13" y="1580" width="26" height="26" fill="#e2e2ec" stroke="#9a9a9a" stroke-width="2"/><rect x="14" y="1581" width="24" height="5" fill="#c8c8cc"/><rect x="14" y="1586" width="7.5" height="19" fill="#ffffff"/><line x1="22" y1="1586" x2="22" y2="1606" stroke="#9a9a9a" stroke-width="1.6"/><g stroke="#34495e" stroke-width="1.8" fill="none"><line x1="25" y1="1596" x2="36.5" y2="1596"/><polyline points="29.5,1591 24.5,1596 29.5,1601"/></g><polygon points="367,1592.8 388.5,1580.3 388.5,1605.3" fill="#4cb848" stroke="#2e8a2e" stroke-width="1.8" stroke-linejoin="round"/><polygon points="410,1580.3 432,1592.8 410,1605.3" fill="#4cb848" stroke="#2e8a2e" stroke-width="1.8" stroke-linejoin="round"/><line x1="464" y1="1596" x2="474" y2="1606" stroke="#e8a030" stroke-width="5.5"/><line x1="464" y1="1596" x2="474" y2="1606" stroke="#f8b848" stroke-width="3.2"/><path d="M462.4,1601.8 A12.8,12.8 0 1 1 470,1594.2 Z" fill="#4cae40" stroke="#2e8a2e" stroke-width="1.6"/><circle cx="467.9" cy="1582.8" r="5.5" fill="#fff" stroke="#9a9ab0" stroke-width="1.2"/><line x1="484.5" y1="1573" x2="484.5" y2="1613" stroke="#a0a0a0" stroke-width="1"/><rect x="495.3" y="1580.2" width="25.3" height="25.5" fill="#e0e0ea" stroke="#9c9c9c" stroke-width="2.4"/><line x1="495.3" y1="1587.5" x2="520.6" y2="1587.5" stroke="#9c9c9c" stroke-width="2"/><g fill="none" stroke="#9c9c9c" stroke-width="2"><rect x="499" y="1590.5" width="6" height="4.5"/><rect x="511" y="1590.5" width="6" height="4.5"/><rect x="499" y="1598" width="6" height="4.5"/><rect x="511" y="1598" width="6" height="4.5"/></g><path d="M534.5,1565 H595.5 V1611 a8,8 0 0 1 -8,8 H542.5 a8,8 0 0 1 -8,-8 Z" fill="#e8e8f0" stroke="#a8a8ba" stroke-width="2.4"/><path d="M597.7,1565 H658.5 V1611 a8,8 0 0 1 -8,8 H605.7 a8,8 0 0 1 -8,-8 Z" fill="#e8e8f0" stroke="#a8a8ba" stroke-width="2.4"/><path d="M660,1565 V1613 a8,8 0 0 0 8,8 H714 a8,8 0 0 0 8,-8 V1565" fill="#f7f7f7" stroke="#a8a8ba" stroke-width="2.4"/><path d="M723,1565 H784 V1611 a8,8 0 0 1 -8,8 H731 a8,8 0 0 1 -8,-8 Z" fill="#e8e8f0" stroke="#a8a8ba" stroke-width="2.4"/><path d="M786.5,1565 H847.5 V1611 a8,8 0 0 1 -8,8 H794.5 a8,8 0 0 1 -8,-8 Z" fill="#e8e8f0" stroke="#a8a8ba" stroke-width="2.4"/><rect x="552.5" y="1577.4" width="25.5" height="25.5" fill="#fff" stroke="#9c9c9c" stroke-width="2"/><rect x="553.5" y="1578.4" width="23.5" height="5.5" fill="#c6defa"/><g stroke="#9c9c9c" stroke-width="1.8"><line x1="557.5" y1="1577.4" x2="557.5" y2="1603"/><line x1="572.5" y1="1577.4" x2="572.5" y2="1603"/><line x1="552.5" y1="1584.5" x2="578" y2="1584.5"/><line x1="552.5" y1="1595.5" x2="578" y2="1595.5"/></g><circle cx="628.2" cy="1589.9" r="13" fill="#fff" stroke="#8c8c8c" stroke-width="2"/><rect x="626.4" y="1580" width="3.6" height="3.6" fill="#3a86e0"/><rect x="626.4" y="1586" width="3.6" height="11.5" fill="#3a86e0"/><rect x="623.5" y="1596" width="9.5" height="2.2" fill="#3a86e0"/><rect x="624.5" y="1586" width="3" height="1.8" fill="#3a86e0"/><rect x="677" y="1577" width="22.5" height="22" rx="3.5" fill="#c8dcf8" stroke="#a0a0a0" stroke-width="1.6"/><rect x="681" y="1581" width="24.5" height="24" rx="3.5" fill="#fff" stroke="#989898" stroke-width="1.8"/><rect x="686.5" y="1588.4" width="13" height="3.2" fill="#8c8c8c"/><rect x="686.5" y="1594.6" width="13" height="3.2" fill="#8c8c8c"/><rect x="739" y="1575" width="30.5" height="30.5" fill="#fff" stroke="#d0d0d0" stroke-width="1.6"/><polyline points="743,1578 743,1601.5 766,1601.5" fill="none" stroke="#8484ac" stroke-width="1.8"/><polyline points="744,1599 750.8,1582.4 760.5,1594.6 765,1586.6" fill="none" stroke="#e070f0" stroke-width="1.6"/><circle cx="750.8" cy="1582.4" r="1.3" fill="#34495e"/><circle cx="760.5" cy="1594.6" r="1.3" fill="#34495e"/><circle cx="765" cy="1586.6" r="1.3" fill="#34495e"/><rect x="801.8" y="1575" width="30.5" height="30.5" fill="#fff" stroke="#d0d0d0" stroke-width="1.6"/><g fill="#8c8c9c"><rect x="805" y="1579.5" width="10" height="1.4"/><rect x="805" y="1583.5" width="4" height="1.4"/><rect x="811" y="1583.5" width="2.5" height="1.4"/></g><circle cx="824.5" cy="1583.5" r="6" fill="#a0c4e8" stroke="#6890c0" stroke-width="1.5"/><path d="M819.5,1580.5 L824.5,1583.5 L829,1580" fill="#e88080"/><path d="M824.5,1583.5 L829.5,1582 L829,1579.5 z" fill="#88c060"/><rect x="810" y="1591" width="3.5" height="10" fill="#e08080"/><rect x="816.5" y="1588" width="3.5" height="13" fill="#80a0d0"/><rect x="823" y="1593" width="3.5" height="8" fill="#88c060"/><polyline points="806,1588 806,1601.5 828.5,1601.5" fill="none" stroke="#8484ac" stroke-width="1.6"/><rect x="853.7" y="1578.4" width="352.3" height="32.8" fill="#fff" stroke="#707070" stroke-width="1.5"/><polyline points="1184.1,1592 1190.5,1598.6 1196.9,1592" fill="none" stroke="#404040" stroke-width="1.5"/><g transform="translate(1233.8,1592.8) rotate(-45) scale(0.88)" fill="none" stroke="#34506e" stroke-width="3.1"><path d="M1,-6.6 H15 A6.6,6.6 0 0 1 15,6.6 H7.5"/><path d="M-1,6.6 H-15 A6.6,6.6 0 0 1 -15,-6.6 H-7.5"/><line x1="-6" y1="0" x2="6" y2="0" stroke-width="4.6" stroke-linecap="round"/></g><polygon points="1252,1593 1262.1,1593 1257,1599.1" fill="#000"/><line x1="1271.6" y1="1573" x2="1271.6" y2="1613" stroke="#a0a0a0" stroke-width="1"/><line x1="1272.8" y1="1573" x2="1272.8" y2="1613" stroke="#fff" stroke-width="1"/><polygon points="1566.8,1589.6 1574,1589.6 1570.4,1594.3" fill="#000"/><line x1="2325" y1="1573" x2="2325" y2="1613" stroke="#a0a0a0" stroke-width="1"/><line x1="2326.3" y1="1573" x2="2326.3" y2="1613" stroke="#fff" stroke-width="1"/><circle cx="2343.9" cy="1588.8" r="10.4" fill="none" stroke="#34495e" stroke-width="3"/><line x1="2351.4" y1="1596.3" x2="2358.9" y2="1603.8" stroke="#34495e" stroke-width="5"/><line x1="2339.0" y1="1589" x2="2348.9" y2="1589" stroke="#34495e" stroke-width="1.9"/><circle cx="2393.9" cy="1588.8" r="10.4" fill="none" stroke="#34495e" stroke-width="3"/><line x1="2401.4" y1="1596.3" x2="2408.9" y2="1603.8" stroke="#34495e" stroke-width="5"/><line x1="2389.0" y1="1589" x2="2398.9" y2="1589" stroke="#34495e" stroke-width="1.9"/><line x1="2393.9" y1="1584" x2="2393.9" y2="1594" stroke="#34495e" stroke-width="1.9"/><g stroke="#a09c90" stroke-width="1.2"><line x1="2424" y1="1628" x2="2436" y2="1616"/><line x1="2429" y1="1628" x2="2436" y2="1621"/></g></g></svg>
<div id="t_4f9819f6a8" class="tx" style="left:862px;top:1582.12px;font-size:22.3px;line-height:22.3px;font-weight:400;font-style:normal;color:#000;font-family:'Liberation Sans',sans-serif;transform:translateX(-1.99px) scaleX(0.9968);transform-origin:0 0;">Unpaired t test of Col: Unpaired</div>
<div id="t_aee6dac9ed" class="tx" style="left:1282.3px;top:1581.12px;font-size:22.3px;line-height:22.3px;font-weight:400;font-style:normal;color:#000;font-family:'Liberation Sans',sans-serif;transform:translateX(-0.40px) scaleX(1.0028);transform-origin:0 0;">Tabular results</div>
<div style="position:absolute;left:0px;top:0px;width:1px;height:1628px;background:#2a2a2a;"></div>
</body></html>
